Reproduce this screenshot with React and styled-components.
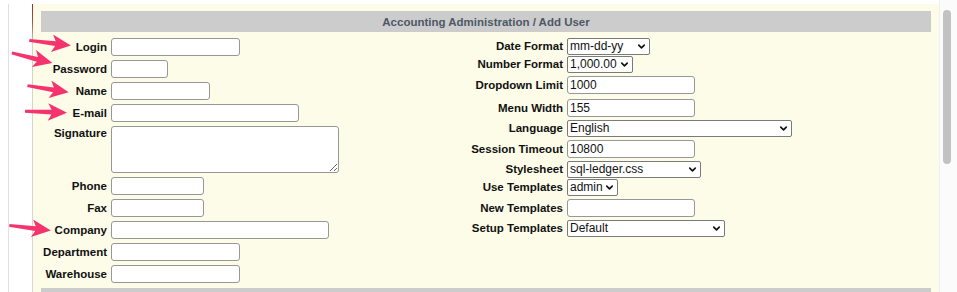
import React from 'react'
import styled, { createGlobalStyle } from 'styled-components'
import { ChevronDown } from 'lucide-react'

const GlobalStyle = createGlobalStyle`
  html, body {
    margin: 0;
    padding: 0;
    background: #ffffff;
    font-family: "Liberation Sans", Arial, Helvetica, sans-serif;
  }
`

const Page = styled.div`
  display: flex;
  width: 957px;
  height: 292px;
  overflow: hidden;
  padding-top: 4px;
  box-sizing: border-box;
  position: relative;
`

const Frame = styled.div`
  flex: 1;
  display: flex;
  margin-left: 8px;
  padding-left: 23px;
  border-left: 1px solid #e0e0e0;
`

const Panel = styled.div`
  flex: 1;
  background: #fcfce8;
  border-left: 1px solid;
  border-image: linear-gradient(#9c2f2c, #a84a46 18px, #d8d2c8 40px, #d8d8d8) 1;
  padding: 7px 8px 0 8px;
  display: flex;
  flex-direction: column;
`

const TitleBar = styled.div`
  height: 21px;
  flex-shrink: 0;
  background: #cccccc;
  color: #4c5866;
  font-weight: bold;
  font-size: 11.5px;
  display: flex;
  align-items: center;
  justify-content: center;
`

const Body = styled.div`
  display: flex;
  margin-top: 6px;
`

const LeftTable = styled.div`
  width: 420px;
  display: grid;
  grid-template-columns: 66px auto;
  column-gap: 4px;
  row-gap: 4px;
  align-items: center;
  justify-items: start;
  align-content: start;
`

const RightTable = styled.div`
  display: grid;
  grid-template-columns: 102px auto;
  column-gap: 4px;
  align-content: start;
  justify-items: start;
  margin-top: -1px;
`

const Label = styled.label`
  justify-self: end;
  font-weight: bold;
  font-size: 11.5px;
  color: #111;
  white-space: nowrap;
  align-self: ${p => (p.$top ? 'start' : 'center')};
  margin-top: ${p => (p.$top ? '1px' : '0')};
`

const RightCell = styled.div`
  height: ${p => p.$h}px;
  display: flex;
  align-items: center;
  justify-self: ${p => (p.$label ? 'end' : 'start')};
`

const TextInput = styled.input`
  box-sizing: border-box;
  width: ${p => p.$w}px;
  height: 18px;
  border: 1px solid #979797;
  border-radius: 3px;
  background: #fff;
  padding: 0 2px;
  font-family: "Liberation Sans", Arial, sans-serif;
  font-size: 12px;
  color: #111;
  outline: none;
`

const TextArea = styled.textarea`
  box-sizing: border-box;
  width: 228px;
  height: 47px;
  border: 1px solid #979797;
  border-radius: 3px;
  background: #fff;
  padding: 1px 2px;
  font-family: "Liberation Sans", Arial, sans-serif;
  font-size: 12px;
  margin: 0;
  display: block;
`

const SelectWrap = styled.div`
  position: relative;
  display: inline-flex;
  width: ${p => p.$w}px;
  height: 17px;
`

const SelectBox = styled.select`
  appearance: none;
  -webkit-appearance: none;
  box-sizing: border-box;
  width: 100%;
  height: 100%;
  border: 1px solid #7a7a7a;
  border-radius: 2px;
  background: #fff;
  padding: 0 14px 0 2px;
  font-family: "Liberation Sans", Arial, sans-serif;
  font-size: 12px;
  color: #111;
  outline: none;
`

const Chevron = styled(ChevronDown)`
  position: absolute;
  right: 3px;
  top: 3px;
  pointer-events: none;
`

const FooterBar = styled.div`
  height: 21px;
  flex-shrink: 0;
  margin-top: 5px;
  background: #cccccc;
`

const ScrollTrack = styled.div`
  width: 18px;
  flex-shrink: 0;
  margin-top: -4px;
  background: #fbfbfb;
  border-left: 1px solid #f0f0f0;
  box-sizing: border-box;
  padding: 10px 0 0 3px;
`

const ScrollThumb = styled.div`
  width: 8px;
  height: 154px;
  border-radius: 4px;
  background: #c2c2c2;
`

const ArrowMark = styled.svg`
  position: absolute;
  left: ${p => p.$x}px;
  top: ${p => p.$y}px;
  width: 42px;
  height: 18px;
  transform: rotate(${p => p.$r}deg);
  pointer-events: none;
`

const Arrow = ({ x, y, r }) => (
  <ArrowMark $x={x} $y={y} $r={r} viewBox="0 0 42 18">
    <path d="M0 7.6 L26.5 6.6 L23 0.2 L42 9 L23 17.8 L26.5 11.4 L0 10.4 Z" fill="#f5336e" />
  </ArrowMark>
)

const Select = ({ w, value }) => (
  <SelectWrap $w={w}>
    <SelectBox defaultValue={value}>
      <option>{value}</option>
    </SelectBox>
    <Chevron size={11} strokeWidth={3.5} color="#111" />
  </SelectWrap>
)

const leftRows = [
  { label: 'Login', w: 129 },
  { label: 'Password', w: 57 },
  { label: 'Name', w: 99 },
  { label: 'E-mail', w: 188 },
  { label: 'Signature', area: true },
  { label: 'Phone', w: 93 },
  { label: 'Fax', w: 93 },
  { label: 'Company', w: 218 },
  { label: 'Department', w: 129 },
  { label: 'Warehouse', w: 129 },
]

const rightRows = [
  { label: 'Date Format', select: true, w: 83, value: 'mm-dd-yy' },
  { label: 'Number Format', select: true, w: 66, value: '1,000.00' },
  { label: 'Dropdown Limit', w: 128, value: '1000' },
  { label: 'Menu Width', w: 128, value: '155' },
  { label: 'Language', select: true, w: 225, value: 'English' },
  { label: 'Session Timeout', w: 128, value: '10800' },
  { label: 'Stylesheet', select: true, w: 134, value: 'sql-ledger.css' },
  { label: 'Use Templates', select: true, w: 51, value: 'admin' },
  { label: 'New Templates', w: 128, value: '' },
  { label: 'Setup Templates', select: true, w: 158, value: 'Default' },
]

export default function App() {
  return (
    <>
      <GlobalStyle />
      <Page>
        <Frame>
          <Panel>
            <TitleBar>Accounting Administration / Add User</TitleBar>
            <Body>
              <LeftTable>
                {leftRows.map(row => (
                  <React.Fragment key={row.label}>
                    <Label $top={row.area}>{row.label}</Label>
                    {row.area ? <TextArea /> : <TextInput $w={row.w} />}
                  </React.Fragment>
                ))}
              </LeftTable>
              <RightTable>
                {rightRows.map(row => {
                  const h = row.select ? 18 : 23
                  return (
                    <React.Fragment key={row.label}>
                      <RightCell $h={h} $label>
                        <Label>{row.label}</Label>
                      </RightCell>
                      <RightCell $h={h}>
                        {row.select ? (
                          <Select w={row.w} value={row.value} />
                        ) : (
                          <TextInput $w={row.w} defaultValue={row.value} />
                        )}
                      </RightCell>
                    </React.Fragment>
                  )
                })}
              </RightTable>
            </Body>
            <FooterBar />
          </Panel>
        </Frame>
        <ScrollTrack>
          <ScrollThumb />
        </ScrollTrack>
        <Arrow x={29} y={34} r={7} />
        <Arrow x={11} y={49} r={14} />
        <Arrow x={27} y={80} r={9} />
        <Arrow x={25} y={103} r={2} />
        <Arrow x={9} y={219} r={7} />
      </Page>
    </>
  )
}
